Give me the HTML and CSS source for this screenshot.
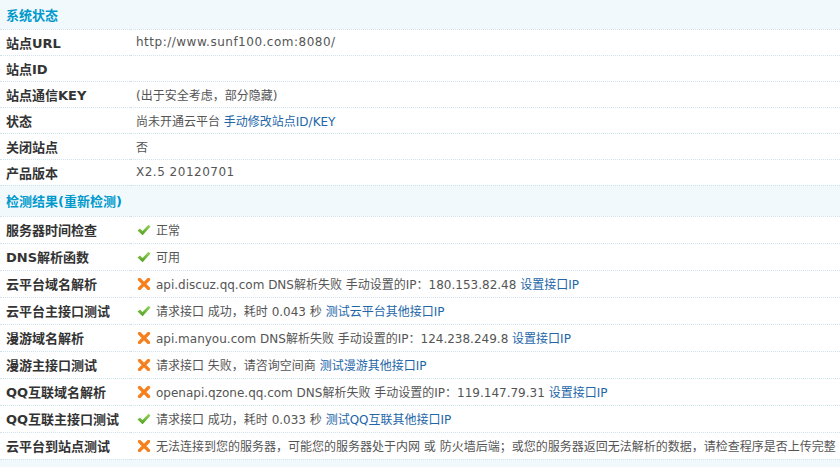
FILE: index.html
```html
<!DOCTYPE html>
<html lang="zh-CN">
<head>
    <meta charset="UTF-8">
    <title>云平台诊断工具</title>
    <link rel="stylesheet" href="styles.css">
</head>
<body>
    <table class="tb">
        <colgroup><col class="c1"><col></colgroup>
        <tr class="hd"><th colspan="2">系统状态</th></tr>
        <tr><td class="lb">站点URL</td><td class="url">http://www.sunf100.com:8080/</td></tr>
        <tr><td class="lb">站点ID</td><td></td></tr>
        <tr><td class="lb">站点通信KEY</td><td>(出于安全考虑，部分隐藏)</td></tr>
        <tr><td class="lb">状态</td><td>尚未开通云平台 <a href="#">手动修改站点ID/KEY</a></td></tr>
        <tr><td class="lb">关闭站点</td><td>否</td></tr>
        <tr><td class="lb">产品版本</td><td class="url">X2.5 20120701</td></tr>

        <tr class="hd hd2"><th colspan="2">检测结果(<a href="#">重新检测</a>)</th></tr>
        <tr class="ck"><td class="lb">服务器时间检查</td><td><i class="ok"></i>正常</td></tr>
        <tr class="ck"><td class="lb">DNS解析函数</td><td><i class="ok"></i>可用</td></tr>
        <tr class="ck"><td class="lb">云平台域名解析</td><td><i class="no"></i>api.discuz.qq.com DNS解析失败 手动设置的IP：180.153.82.48 <a href="#">设置接口IP</a></td></tr>
        <tr class="ck"><td class="lb">云平台主接口测试</td><td><i class="ok"></i>请求接口 成功，耗时 0.043 秒 <a href="#">测试云平台其他接口IP</a></td></tr>
        <tr class="ck"><td class="lb">漫游域名解析</td><td><i class="no"></i>api.manyou.com DNS解析失败 手动设置的IP：124.238.249.8 <a href="#">设置接口IP</a></td></tr>
        <tr class="ck"><td class="lb">漫游主接口测试</td><td><i class="no"></i>请求接口 失败，请咨询空间商 <a href="#">测试漫游其他接口IP</a></td></tr>
        <tr class="ck"><td class="lb">QQ互联域名解析</td><td><i class="no"></i>openapi.qzone.qq.com DNS解析失败 手动设置的IP：119.147.79.31 <a href="#">设置接口IP</a></td></tr>
        <tr class="ck"><td class="lb">QQ互联主接口测试</td><td><i class="ok"></i>请求接口 成功，耗时 0.033 秒 <a href="#">测试QQ互联其他接口IP</a></td></tr>
        <tr class="ck"><td class="lb">云平台到站点测试</td><td><i class="no"></i>无法连接到您的服务器，可能您的服务器处于内网 或 防火墙后端；或您的服务器返回无法解析的数据，请检查程序是否上传完整</td></tr>
        <tr class="hd foot"><th colspan="2"></th></tr>
    </table>
</body>
</html>
```

FILE: styles.css
```css
body{
    margin: 0;
    background: #fff;
    font: 12px "DejaVu Sans", "Noto Sans CJK SC", sans-serif;
    color: #555;
    overflow: hidden;
}
a{
    color: #2366a8;
    text-decoration: none;
}

.tb{
    border-collapse: collapse;
    table-layout: fixed;
    width: 100%;
    white-space: nowrap;
}
.tb .c1{
    width: 130px;
}
.tb td, .tb th{
    padding: 0 6px;
    border-bottom: 1px dotted #cfe3ee;
    text-align: left;
    vertical-align: middle;
}
.tb tr{
    height: 26px;
}
.tb .lb{
    color: #333;
    font-weight: bold;
    font-size: 13px;
}
.url{
    letter-spacing: 0.5px;
}

.hd th{
    background-color: #f2f9fd;
    color: #09c;
    font-size: 13px;
    font-weight: bold;
}
.hd{
    height: 29px !important;
}
.hd2{
    height: 31px !important;
}
.hd2 a{
    color: #09c;
}
.tb .ck{
    height: 27px;
}
.foot{
    height: 12px !important;
}
.foot th{
    border-bottom: none;
}

.ok, .no{
    display: inline-block;
    width: 14px;
    height: 12px;
    margin: 0 5px 0 1px;
    vertical-align: -1px;
    background-repeat: no-repeat;
}
.ok{
    background-image: url("data:image/svg+xml,%3Csvg xmlns='http://www.w3.org/2000/svg' viewBox='0 0 14 12'%3E%3Cdefs%3E%3ClinearGradient id='g' x1='0' y1='0' x2='0' y2='1'%3E%3Cstop offset='0' stop-color='%2395d55a'/%3E%3Cstop offset='1' stop-color='%234f9e1f'/%3E%3C/linearGradient%3E%3C/defs%3E%3Cpath d='M0.5 6.5 L3 4.5 L5.5 7 L11.5 0.8 L13.5 2.5 L5.6 11.2 Z' fill='url(%23g)'/%3E%3C/svg%3E");
}
.no{
    background-image: url("data:image/svg+xml,%3Csvg xmlns='http://www.w3.org/2000/svg' viewBox='0 0 14 12'%3E%3Cpath d='M2.5 1.5 L11.5 10.5 M11.5 1.5 L2.5 10.5' stroke='%23f7801e' stroke-width='3.2' stroke-linecap='round'/%3E%3C/svg%3E");
}
```
